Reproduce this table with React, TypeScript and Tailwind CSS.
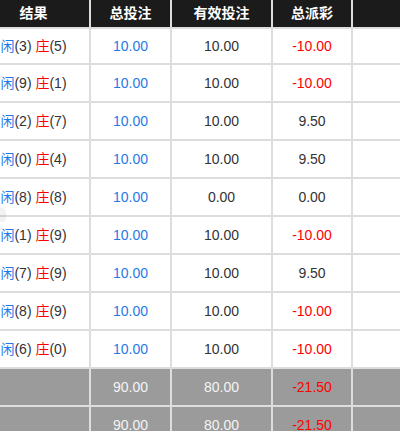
import React from 'react'

type Row = {
  player: number
  banker: number
  bet: string
  valid: string
  payout: string
}

const rows: Row[] = [
  { player: 3, banker: 5, bet: '10.00', valid: '10.00', payout: '-10.00' },
  { player: 9, banker: 1, bet: '10.00', valid: '10.00', payout: '-10.00' },
  { player: 2, banker: 7, bet: '10.00', valid: '10.00', payout: '9.50' },
  { player: 0, banker: 4, bet: '10.00', valid: '10.00', payout: '9.50' },
  { player: 8, banker: 8, bet: '10.00', valid: '0.00', payout: '0.00' },
  { player: 1, banker: 9, bet: '10.00', valid: '10.00', payout: '-10.00' },
  { player: 7, banker: 9, bet: '10.00', valid: '10.00', payout: '9.50' },
  { player: 8, banker: 9, bet: '10.00', valid: '10.00', payout: '-10.00' },
  { player: 6, banker: 0, bet: '10.00', valid: '10.00', payout: '-10.00' },
]

const totals = [
  { bet: '90.00', valid: '80.00', payout: '-21.50' },
  { bet: '90.00', valid: '80.00', payout: '-21.50' },
]

export default function App() {
  return (
    <div
      className="relative w-[400px] h-[431px] overflow-hidden bg-white text-[14px]"
      style={{ fontFamily: '"Liberation Sans", Arial, "Noto Sans CJK SC", sans-serif' }}
    >
      <table className="table-fixed w-[459px] -ml-[24px] -mt-[2px] border-separate border-spacing-[2px] bg-[#dddddd] text-center">
        <thead>
          <tr className="text-white font-bold">
            <th className="w-[111px] h-[27px] p-0 bg-[#1b1b1b]">结果</th>
            <th className="w-[79px] h-[27px] p-0 bg-[#1b1b1b]">总投注</th>
            <th className="w-[99px] h-[27px] p-0 bg-[#1b1b1b]">有效投注</th>
            <th className="w-[78px] h-[27px] p-0 bg-[#1b1b1b]">总派彩</th>
            <th className="w-[80px] h-[27px] p-0 bg-[#1b1b1b]"></th>
          </tr>
        </thead>
        <tbody>
          {rows.map((r, i) => {
            const h = i === 0 ? 'h-[34px]' : 'h-[36px]'
            const lose = r.payout.startsWith('-')
            return (
              <tr key={i} className="bg-white">
                <td className={`${h} p-0 text-[#333333]`}>
                  <span className="text-[#1f7ae8]">闲</span>({r.player}){' '}
                  <span className="text-[#ff0000]">庄</span>({r.banker})
                </td>
                <td className={`${h} p-0 text-[#1f7ae8]`}>{r.bet}</td>
                <td className={`${h} p-0 text-[#333333]`}>{r.valid}</td>
                <td className={`${h} p-0 ${lose ? 'text-[#ff0000]' : 'text-[#333333]'}`}>{r.payout}</td>
                <td className={`${h} p-0`}></td>
              </tr>
            )
          })}
          {totals.map((t, i) => (
            <tr key={'t' + i} className="bg-[#9b9b9b] text-[#f4f4f4]">
              <td className="h-[36px] p-0"></td>
              <td className="h-[36px] p-0">{t.bet}</td>
              <td className="h-[36px] p-0">{t.valid}</td>
              <td className="h-[36px] p-0 text-[#ff0000]">{t.payout}</td>
              <td className="h-[36px] p-0"></td>
            </tr>
          ))}
        </tbody>
      </table>

      {/* faint floating handle on the left edge */}
      <div className="absolute left-0 top-[208px] w-[6px] h-[14px] bg-black/5 rounded-r-sm" />
    </div>
  )
}
